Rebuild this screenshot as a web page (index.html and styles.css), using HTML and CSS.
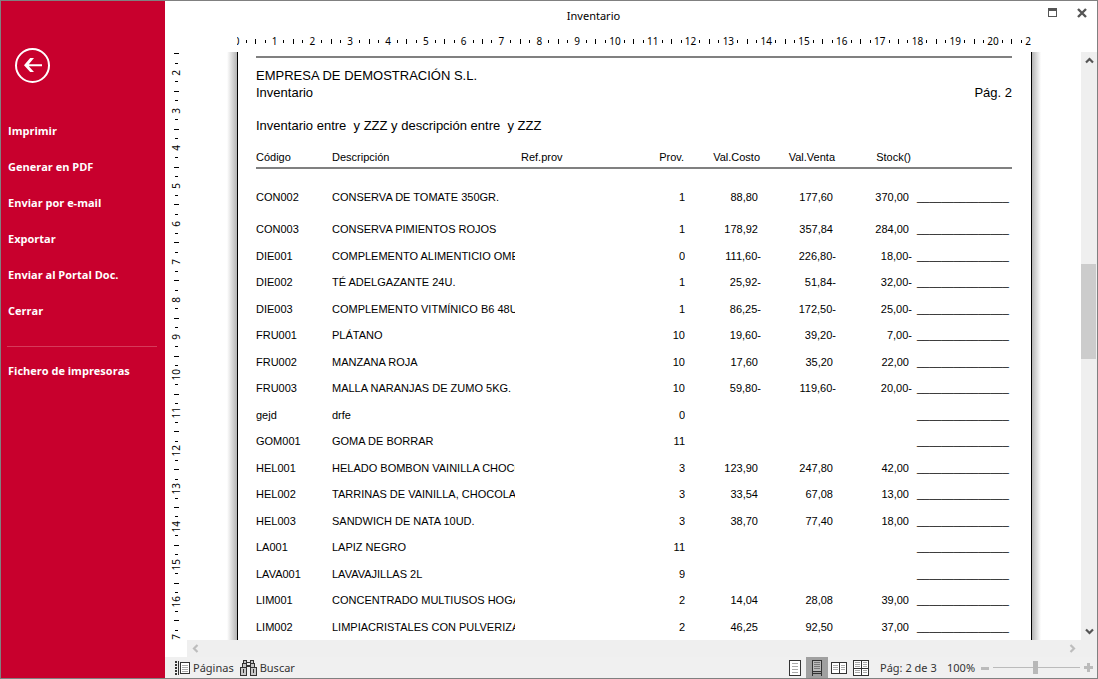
FILE: index.html
```html
<!DOCTYPE html>
<html lang="es">
<head>
<meta charset="utf-8">
<title>Inventario</title>
<link rel="stylesheet" href="styles.css">
</head>
<body>
<div class="window">
  <aside class="sidebar">
    <button class="back" type="button" aria-label="Volver">
      <svg width="36" height="36" viewBox="0 0 36 36"><circle cx="17.5" cy="17.5" r="16.5" fill="none" stroke="#fff" stroke-width="2"/><path d="M9 17.2 L15.2 10 H19 L13.8 16.2 H27 V18.2 H13.8 L19 24 H15.2 Z" fill="#fff"/></svg>
    </button>
    <nav class="menu">
      <a href="#">Imprimir</a>
      <a href="#">Generar en PDF</a>
      <a href="#">Enviar por e-mail</a>
      <a href="#">Exportar</a>
      <a href="#">Enviar al Portal Doc.</a>
      <a href="#">Cerrar</a>
      <hr>
      <a href="#">Fichero de impresoras</a>
    </nav>
  </aside>

  <main class="main">
    <header class="titlebar">
      <h1>Inventario</h1>
      <div class="controls">
        <button type="button" aria-label="Maximizar"><svg width="9" height="9" viewBox="0 0 9 9" shape-rendering="crispEdges"><path d="M0 0h9v9H0zM1 3v5h7V3z" fill="#555" fill-rule="evenodd"/></svg></button>
        <button type="button" aria-label="Cerrar ventana"><svg width="10" height="10" viewBox="0 0 10 10"><path d="M1 1l8 8M9 1L1 9" stroke="#555" stroke-width="2.4"/></svg></button>
      </div>
    </header>

    <div class="hruler">
      <div class="hclip">
        <ol class="scale">
          <li><b>0</b><i></i><i></i><i></i></li><li><b>1</b><i></i><i></i><i></i></li><li><b>2</b><i></i><i></i><i></i></li><li><b>3</b><i></i><i></i><i></i></li><li><b>4</b><i></i><i></i><i></i></li><li><b>5</b><i></i><i></i><i></i></li><li><b>6</b><i></i><i></i><i></i></li><li><b>7</b><i></i><i></i><i></i></li><li><b>8</b><i></i><i></i><i></i></li><li><b>9</b><i></i><i></i><i></i></li><li><b>10</b><i></i><i></i><i></i></li><li><b>11</b><i></i><i></i><i></i></li><li><b>12</b><i></i><i></i><i></i></li><li><b>13</b><i></i><i></i><i></i></li><li><b>14</b><i></i><i></i><i></i></li><li><b>15</b><i></i><i></i><i></i></li><li><b>16</b><i></i><i></i><i></i></li><li><b>17</b><i></i><i></i><i></i></li><li><b>18</b><i></i><i></i><i></i></li><li><b>19</b><i></i><i></i><i></i></li><li><b>20</b><i></i><i></i><i></i></li><li><b>21</b><i></i><i></i><i></i></li>
        </ol>
      </div>
    </div>

    <div class="vruler">
      <ol class="scale vertical">
        <li><b></b><i></i><i></i><i></i></li><li><b>2</b><i></i><i></i><i></i></li><li><b>3</b><i></i><i></i><i></i></li><li><b>4</b><i></i><i></i><i></i></li><li><b>5</b><i></i><i></i><i></i></li><li><b>6</b><i></i><i></i><i></i></li><li><b>7</b><i></i><i></i><i></i></li><li><b>8</b><i></i><i></i><i></i></li><li><b>9</b><i></i><i></i><i></i></li><li><b>10</b><i></i><i></i><i></i></li><li><b>11</b><i></i><i></i><i></i></li><li><b>12</b><i></i><i></i><i></i></li><li><b>13</b><i></i><i></i><i></i></li><li><b>14</b><i></i><i></i><i></i></li><li><b>15</b><i></i><i></i><i></i></li><li><b>16</b><i></i><i></i><i></i></li><li><b>17</b><i></i><i></i><i></i></li>
      </ol>
    </div>

    <section class="viewport">
      <div class="shade left"></div>
      <article class="page">
        <h2>EMPRESA DE DEMOSTRACIÓN S.L.</h2>
        <div class="subhead"><span>Inventario</span><span>Pág. 2</span></div>
        <p class="filter">Inventario entre&nbsp; y ZZZ y descripción entre&nbsp; y ZZZ</p>
        <table>
          <colgroup><col class="c-code"><col class="c-desc"><col class="c-ref"><col class="c-prov"><col class="c-num"><col class="c-sale"><col class="c-num"><col class="c-count"></colgroup>
          <thead>
            <tr><th>Código</th><th>Descripción</th><th class="ref">Ref.prov</th><th class="num">Prov.</th><th class="num">Val.Costo</th><th class="num">Val.Venta</th><th class="num">Stock()</th><th></th></tr>
          </thead>
          <tbody>
            <tr><td>CON002</td><td>CONSERVA DE TOMATE 350GR.</td><td></td><td class="num">1</td><td class="num">88,80&nbsp;</td><td class="num">177,60&nbsp;</td><td class="num">370,00&nbsp;</td><td class="count">_______________</td></tr>
            <tr><td>CON003</td><td>CONSERVA PIMIENTOS ROJOS</td><td></td><td class="num">1</td><td class="num">178,92&nbsp;</td><td class="num">357,84&nbsp;</td><td class="num">284,00&nbsp;</td><td class="count">_______________</td></tr>
            <tr><td>DIE001</td><td>COMPLEMENTO ALIMENTICIO OMEGA</td><td></td><td class="num">0</td><td class="num">111,60-</td><td class="num">226,80-</td><td class="num">18,00-</td><td class="count">_______________</td></tr>
            <tr><td>DIE002</td><td>TÉ ADELGAZANTE 24U.</td><td></td><td class="num">1</td><td class="num">25,92-</td><td class="num">51,84-</td><td class="num">32,00-</td><td class="count">_______________</td></tr>
            <tr><td>DIE003</td><td>COMPLEMENTO VITMÍNICO B6 48U.</td><td></td><td class="num">1</td><td class="num">86,25-</td><td class="num">172,50-</td><td class="num">25,00-</td><td class="count">_______________</td></tr>
            <tr><td>FRU001</td><td>PLÁTANO</td><td></td><td class="num">10</td><td class="num">19,60-</td><td class="num">39,20-</td><td class="num">7,00-</td><td class="count">_______________</td></tr>
            <tr><td>FRU002</td><td>MANZANA ROJA</td><td></td><td class="num">10</td><td class="num">17,60&nbsp;</td><td class="num">35,20&nbsp;</td><td class="num">22,00&nbsp;</td><td class="count">_______________</td></tr>
            <tr><td>FRU003</td><td>MALLA NARANJAS DE ZUMO 5KG.</td><td></td><td class="num">10</td><td class="num">59,80-</td><td class="num">119,60-</td><td class="num">20,00-</td><td class="count">_______________</td></tr>
            <tr><td>gejd</td><td>drfe</td><td></td><td class="num">0</td><td></td><td></td><td></td><td class="count">_______________</td></tr>
            <tr><td>GOM001</td><td>GOMA DE BORRAR</td><td></td><td class="num">11</td><td></td><td></td><td></td><td class="count">_______________</td></tr>
            <tr><td>HEL001</td><td>HELADO BOMBON VAINILLA CHOCO</td><td></td><td class="num">3</td><td class="num">123,90&nbsp;</td><td class="num">247,80&nbsp;</td><td class="num">42,00&nbsp;</td><td class="count">_______________</td></tr>
            <tr><td>HEL002</td><td>TARRINAS DE VAINILLA, CHOCOLATE</td><td></td><td class="num">3</td><td class="num">33,54&nbsp;</td><td class="num">67,08&nbsp;</td><td class="num">13,00&nbsp;</td><td class="count">_______________</td></tr>
            <tr><td>HEL003</td><td>SANDWICH DE NATA 10UD.</td><td></td><td class="num">3</td><td class="num">38,70&nbsp;</td><td class="num">77,40&nbsp;</td><td class="num">18,00&nbsp;</td><td class="count">_______________</td></tr>
            <tr><td>LA001</td><td>LAPIZ NEGRO</td><td></td><td class="num">11</td><td></td><td></td><td></td><td class="count">_______________</td></tr>
            <tr><td>LAVA001</td><td>LAVAVAJILLAS 2L</td><td></td><td class="num">9</td><td></td><td></td><td></td><td class="count">_______________</td></tr>
            <tr><td>LIM001</td><td>CONCENTRADO MULTIUSOS HOGAR</td><td></td><td class="num">2</td><td class="num">14,04&nbsp;</td><td class="num">28,08&nbsp;</td><td class="num">39,00&nbsp;</td><td class="count">_______________</td></tr>
            <tr><td>LIM002</td><td>LIMPIACRISTALES CON PULVERIZADOR</td><td></td><td class="num">2</td><td class="num">46,25&nbsp;</td><td class="num">92,50&nbsp;</td><td class="num">37,00&nbsp;</td><td class="count">_______________</td></tr>
          </tbody>
        </table>
      </article>
      <div class="shade right"></div>
    </section>

    <div class="vscroll">
      <button type="button" aria-label="Subir"><svg width="9" height="7" viewBox="0 0 9 7"><path d="M1 5.5L4.5 2L8 5.5" fill="none" stroke="#555" stroke-width="2.2"/></svg></button>
      <span class="above"></span><span class="thumb"></span><span class="below"></span>
      <button type="button" aria-label="Bajar"><svg width="9" height="7" viewBox="0 0 9 7"><path d="M1 1.5L4.5 5L8 1.5" fill="none" stroke="#555" stroke-width="2.2"/></svg></button>
    </div>

    <div class="hscroll">
      <button type="button" aria-label="Izquierda"><svg width="7" height="9" viewBox="0 0 7 9"><path d="M5.5 1L2 4.5L5.5 8" fill="none" stroke="#bdbdbd" stroke-width="2.2"/></svg></button>
      <button type="button" aria-label="Derecha"><svg width="7" height="9" viewBox="0 0 7 9"><path d="M1.5 1L5 4.5L1.5 8" fill="none" stroke="#bdbdbd" stroke-width="2.2"/></svg></button>
    </div>

    <footer class="status">
      <button class="tool" type="button">
        <svg width="15" height="16" viewBox="0 0 15 16" shape-rendering="crispEdges"><path d="M0 1h2v2H0zM0 4h2v2H0zM0 7h2v2H0zM0 10h2v2H0zM0 13h2v2H0zM3 1h1v14H3z" fill="#333"/><path d="M5.5 2.5h9v11h-9z" fill="#fff" stroke="#333"/><path d="M7 5.5h6M7 7.5h6M7 9.5h6M7 11.5h6" stroke="#aaa"/></svg>
        Páginas
      </button>
      <button class="tool" type="button">
        <svg width="17" height="16" viewBox="0 0 17 16" shape-rendering="crispEdges"><path d="M3.5 .5h3v3h-3zM10.5 .5h3v3h-3zM2.5 3.5h4v4h-4zM10.5 3.5h4v4h-4zM.5 7.5h6v8h-6zM10.5 7.5h6v8h-6z" fill="#c8c8c8" stroke="#333"/><path d="M7 2h3v1H7zM7 5h3v2H7zM3 9h1v4H3zM13 9h1v4h-1z" fill="#333"/></svg>
        Buscar
      </button>
      <div class="views">
        <button type="button" aria-label="Una página"><svg width="12" height="16" viewBox="0 0 12 16" shape-rendering="crispEdges"><path d="M.5.5h11v15H.5z" fill="#fff" stroke="#333"/><path d="M3 3.5h6M3 6.5h6M3 9.5h6M3 12.5h6" stroke="#aaa"/></svg></button>
        <button type="button" class="on" aria-label="Continuo"><svg width="12" height="16" viewBox="0 0 12 16" shape-rendering="crispEdges"><path d="M1.5 .5h9v11h-9z" fill="#bbb" stroke="#333"/><path d="M3 2.5h6M3 4.5h6M3 6.5h6M3 8.5h6" stroke="#777"/><path d="M1 11h10v1H1zM1 12h1v4H1zM10 12h1v4h-1zM2 13h8v1H2z" fill="#333"/></svg></button>
        <button type="button" aria-label="Dos páginas"><svg width="16" height="12" viewBox="0 0 16 12" shape-rendering="crispEdges"><path d="M.5.5h15v11H.5zM8.5 .5v11" fill="#fff" stroke="#333"/><path d="M2 3.5h5M2 5.5h5M2 7.5h5M10 3.5h4M10 5.5h4M10 7.5h4" stroke="#aaa"/></svg></button>
        <button type="button" aria-label="Varias páginas"><svg width="16" height="16" viewBox="0 0 16 16" shape-rendering="crispEdges"><path d="M.5.5h15v15H.5zM8.5 .5v15M.5 8.5h15" fill="#fff" stroke="#333"/><path d="M2 2.5h5M2 4.5h5M2 6.5h5M10 2.5h4M10 4.5h4M10 6.5h4M2 10.5h5M2 12.5h5M10 10.5h4M10 12.5h4" stroke="#aaa"/></svg></button>
      </div>
      <span class="pageno">Pág: 2 de 3</span>
      <label class="zoomlabel" for="zoom">100%</label>
      <button class="step" type="button" aria-label="Alejar"><svg width="8" height="8" viewBox="0 0 8 8" shape-rendering="crispEdges"><path d="M0 3h8v3H0z" fill="#bbb"/></svg></button>
      <input id="zoom" class="zoom" type="range" min="0" max="100" value="49">
      <button class="step" type="button" aria-label="Acercar"><svg width="9" height="9" viewBox="0 0 9 9" shape-rendering="crispEdges"><path d="M0 3h3V0h3v3h3v3H6v3H3V6H0z" fill="#bbb"/></svg></button>
    </footer>
  </main>
</div>
</body>
</html>
```
FILE: styles.css
```css
* { box-sizing: border-box; margin: 0; padding: 0; }

body {
  font-family: "Noto Sans", "Open Sans", sans-serif;
  font-size: 11px;
  color: #000;
  background: #fff;
}

button {
  display: flex;
  align-items: center;
  justify-content: center;
  border: 0;
  background: none;
  font: inherit;
  color: inherit;
}

svg { display: block; flex: none; }
ol { list-style: none; }

.window {
  display: grid;
  grid-template-columns: 164px minmax(0, 1fr);
  grid-template-rows: minmax(0, 1fr);
  height: 100vh;
  border: 1px solid #808080;
  overflow: hidden;
}

/* Sidebar */
.sidebar { background: #c8002d; color: #fff; padding: 47px 8px 0 6px; }
.back { margin: 0 0 29px 8px; }
.menu a {
  display: block;
  padding-left: 1px;
  line-height: 36px;
  font-family: "Open Sans", "Noto Sans", sans-serif;
  font-size: 11px;
  font-weight: 700;
  color: inherit;
  text-decoration: none;
}
.menu hr { height: 1px; margin: 17px 0 6px; border: 0; background: #d63a5a; }

/* Main area */
.main {
  display: grid;
  grid-template-columns: 22px minmax(0, 1fr) 16px;
  grid-template-rows: 29px 22px minmax(0, 1fr) 17px 21px;
}

.titlebar { grid-column: 1 / -1; display: flex; align-items: center; }
.titlebar h1 { flex: 1; text-align: center; font-size: 11px; font-weight: 400; }
.controls { display: flex; width: 75px; padding: 0 5px 6px 0; justify-content: flex-end; }
.controls button { width: 20px; height: 20px; }
.controls button + button { margin-left: 10px; }

/* Rulers */
.hruler { grid-column: 2; display: flex; justify-content: center; }
.hclip { width: 794px; overflow: hidden; }
.scale { display: grid; grid-template-columns: repeat(22, minmax(0, 1fr)); width: 832px; height: 22px; margin-left: -5px; }
.scale li { display: grid; grid-template-columns: repeat(4, minmax(0, 1fr)); justify-items: center; align-items: center; }
.scale b { font-size: 10px; font-weight: 400; line-height: 12px; }
.scale i { width: 1px; height: 3px; background: #000; }
.scale i:nth-of-type(2) { height: 5px; }

.vruler { grid-column: 1; grid-row: 3; overflow: hidden; }
.vertical { grid-template: repeat(17, minmax(0, 1fr)) / 1fr; width: 22px; height: 643px; margin: -22px 0 0; }
.vertical li { grid-template: repeat(4, minmax(0, 1fr)) / 1fr; }
.vertical b { writing-mode: vertical-rl; transform: rotate(180deg); }
.vertical i { width: 3px; height: 1px; }
.vertical i:nth-of-type(2) { width: 5px; height: 1px; }

/* Page preview */
.viewport { grid-column: 2; grid-row: 3; display: flex; justify-content: center; overflow: hidden; }
.shade { flex: none; width: 10px; }
.left { background: linear-gradient(to right, #fff, #b4b4b4); }
.right { width: 9px; background: linear-gradient(to left, #fff, #b4b4b4); }
.page {
  flex: none;
  width: 795px;
  min-height: 100%;
  padding: 4px 19px 0 18px;
  border: solid #000;
  border-width: 0 1px;
  font-family: "Liberation Sans", Arial, sans-serif;
  font-size: 13px;
  line-height: 17px;
}
.page h2 { padding-top: 9px; border-top: 2px solid #808080; font-size: 13px; font-weight: 400; }
.subhead { display: flex; justify-content: space-between; }
.filter { margin-top: 16px; }

table { width: 100%; margin-top: 14px; table-layout: fixed; border-collapse: separate; border-spacing: 0; font-size: 11px; line-height: 18px; }
.c-code, .c-num { width: 76px; }
.c-desc { width: 183px; }
.c-ref { width: 104px; }
.c-prov { width: 66px; }
.c-sale { width: 75px; }
th, td { overflow: hidden; white-space: nowrap; text-align: left; vertical-align: top; font-weight: 400; }
th { height: 21px; border-bottom: 2px solid #808080; }
td { height: 26px; }
tbody tr:nth-child(even) td { height: 27px; }
tbody tr:first-child td { height: 51px; padding-top: 19px; }
.ref { padding-left: 6px; }
th.num, td.num { text-align: right; }
th.num { padding-right: 1px; }
.count { padding-left: 5px; }

/* Scroll bars */
.vscroll { grid-column: 3; grid-row: 3; display: flex; flex-direction: column; background: #efefef; }
.vscroll button { height: 17px; }
.above { flex: 195; }
.thumb { flex: 95; margin-right: 1px; background: #ccc; }
.below { flex: 264; }
.hscroll { grid-column: 2 / -1; display: flex; justify-content: space-between; padding-right: 16px; background: #efefef; }
.hscroll button { width: 17px; }

/* Status bar */
.status { grid-column: 1 / -1; display: flex; align-items: center; padding: 0 4px 0 10px; background: #f0f0f0; color: #333; white-space: nowrap; }
.tool { gap: 3px; margin-right: 6px; }
.views { display: flex; align-self: stretch; margin-left: auto; }
.views button { width: 22px; }
.views .on { background: #a0a0a0; }
.pageno { width: 67px; padding-left: 8px; }
.zoomlabel { width: 42px; padding-left: 8px; }
.zoom { width: 87px; height: 13px; margin: 0 4px; appearance: none; background: linear-gradient(#bbb, #bbb) center / 100% 1px no-repeat; }
.zoom::-webkit-slider-thumb { appearance: none; width: 5px; height: 13px; background: #b8b8b8; }
```
